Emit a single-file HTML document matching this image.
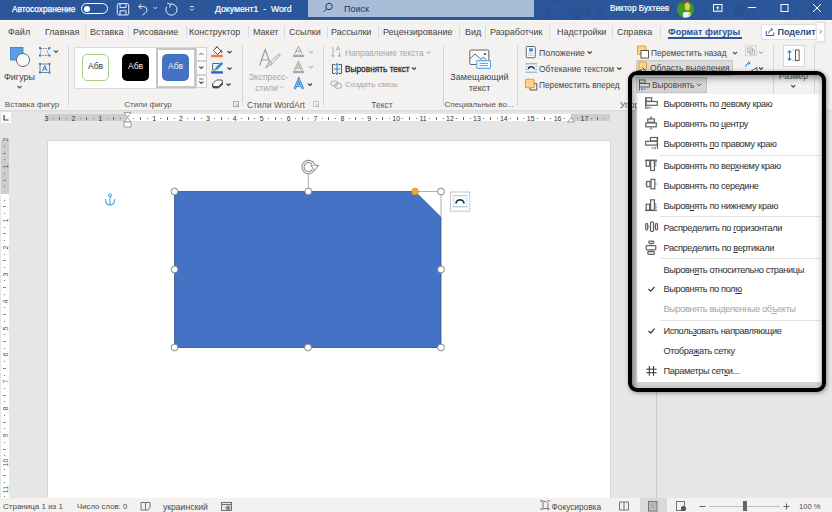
<!DOCTYPE html>
<html><head><meta charset="utf-8">
<style>
*{margin:0;padding:0;box-sizing:border-box}
html,body{width:832px;height:512px;overflow:hidden;background:#f3f2f1;font-family:"Liberation Sans",sans-serif;position:relative}
.a{position:absolute;white-space:nowrap;line-height:10px}
svg{position:absolute;overflow:visible}
u{text-underline-offset:1px;text-decoration-thickness:0.8px}
.m{-webkit-text-stroke:0.05px currentColor}
</style></head><body>
<div class="a" style="left:0px;top:0px;width:832px;height:20px;background:#2b579a;"></div>
<div class="a" style="left:0px;top:20px;width:832px;height:1px;background:#fbfbf8;"></div>
<div class="a" style="left:12px;top:3.5px;font-size:8.3px;color:#fff;font-weight:normal;-webkit-text-stroke:0.25px #fff">Автосохранение</div>
<div class="a" style="left:81px;top:3px;width:27px;height:11px;border:1px solid #fff;border-radius:6px"></div>
<div class="a" style="left:84px;top:5.5px;width:6px;height:6px;background:#fff;border-radius:50%"></div>
<svg style="left:0;top:0" width="1" height="1" fill="none" stroke="#e8eef7" stroke-width="1">
<rect x="117.3" y="3.6" width="11.4" height="11.4" rx="1.5"/>
<path d="M120 3.6 V7.6 H126 V3.6"/>
<path d="M120 15 V10.8 H126 V15"/>
<path d="M138.8 6.6 L141.3 4.1 M138.8 6.6 L141.3 9.1 M138.8 6.6 H143.5 A3.4 3.4 0 0 1 145.2 13 L142.5 15.2" />
<path d="M153.6 7 L155.4 8.8 L157.2 7" stroke-width="0.9"/>
<path d="M170.3 4.1 A5.6 5.6 0 1 1 166.7 6.6" />
<path d="M167.2 3.3 L170.6 4.2 L169.6 7.6" />
<path d="M189.8 6.6 H194 M190 8.6 L191.9 10.5 L193.8 8.6" stroke-width="0.9"/>
</svg>
<div class="a" style="left:215px;top:3.5px;font-size:8.7px;color:#fff;font-weight:normal;-webkit-text-stroke:0.2px #fff">Документ1&nbsp; - &nbsp;Word</div>
<svg style="left:0;top:0" width="1" height="1"><g stroke="#24508f" stroke-width="1" fill="none" opacity="0.9">
<path d="M541 0 L555 20 M555 0 L541 20 M553 2 H564 L571 12 L564 20 M571 12 H590"/>
<circle cx="584" cy="10.5" r="5.5"/>
<path d="M593 0 L607 20 M607 0 L593 20"/>
<path d="M700 0 L712 20 M712 0 L700 20 M745 0 L759 20 M759 0 L745 20 M803 0 L817 20 M817 0 L803 20"/>
<circle cx="791" cy="11" r="6"/>
</g>
<path d="M544 20 L548.5 13 L553 20 Z M572 20 L577 13 L582 20 Z" fill="#24508f" opacity="0.8"/>
<circle cx="739" cy="10" r="6" fill="#26508c" opacity="0.8"/>
</svg>
<div class="a" style="left:308px;top:0px;width:226px;height:17px;background:#a9bcd7;"></div>
<svg style="left:0;top:0" width="1" height="1" fill="none" stroke="#1f3864" stroke-width="1">
<circle cx="329" cy="6.5" r="3.2"/><path d="M326.7 8.8 L323.5 12"/></svg>
<div class="a" style="left:344px;top:3.5px;font-size:9px;color:#1f3864;font-weight:normal;">Поиск</div>
<div class="a" style="left:610px;top:4.3px;font-size:8.2px;color:#fff;font-weight:normal;-webkit-text-stroke:0.2px #fff">Виктор Бухтеев</div>
<svg style="left:0;top:0" width="1" height="1"><defs><clipPath id="av"><circle cx="685.5" cy="9.2" r="8.5"/></clipPath></defs>
<g clip-path="url(#av)"><rect x="676" y="0" width="20" height="20" fill="#3f9a2c"/><rect x="676" y="0" width="20" height="4" fill="#7a5a2a"/>
<ellipse cx="687.3" cy="6.5" rx="2.6" ry="4" fill="#f0c93a"/><rect x="683" y="12" width="7.5" height="8" rx="1.5" fill="#f2f2f2"/><circle cx="689.5" cy="14.5" r="1.3" fill="#eec23a"/></g></svg>
<svg style="left:0;top:0" width="1" height="1" fill="none" stroke="#fff" stroke-width="1">
<rect x="713.5" y="4.5" width="8.5" height="6.8"/><path d="M717.75 10.5 V6.5 M716.2 8 L717.75 6.5 L719.3 8" stroke-width="0.9"/>
<path d="M748 7.5 H756"/>
<rect x="781" y="4.5" width="7" height="7"/>
<path d="M813 4 L821 12 M821 4 L813 12"/>
</svg>
<div class="a" style="left:8px;top:27px;font-size:9px;color:#444;font-weight:normal;">Файл</div>
<div class="a" style="left:45px;top:27px;font-size:9px;color:#444;font-weight:normal;">Главная</div>
<div class="a" style="left:90px;top:27px;font-size:9px;color:#444;font-weight:normal;">Вставка</div>
<div class="a" style="left:133px;top:27px;font-size:9px;color:#444;font-weight:normal;">Рисование</div>
<div class="a" style="left:189px;top:27px;font-size:9px;color:#444;font-weight:normal;">Конструктор</div>
<div class="a" style="left:253px;top:27px;font-size:9px;color:#444;font-weight:normal;">Макет</div>
<div class="a" style="left:289px;top:27px;font-size:9px;color:#444;font-weight:normal;">Ссылки</div>
<div class="a" style="left:331px;top:27px;font-size:9px;color:#444;font-weight:normal;">Рассылки</div>
<div class="a" style="left:383px;top:27px;font-size:9px;color:#444;font-weight:normal;">Рецензирование</div>
<div class="a" style="left:465px;top:27px;font-size:9px;color:#444;font-weight:normal;">Вид</div>
<div class="a" style="left:490px;top:27px;font-size:9px;color:#444;font-weight:normal;">Разработчик</div>
<div class="a" style="left:557px;top:27px;font-size:9px;color:#444;font-weight:normal;">Надстройки</div>
<div class="a" style="left:617px;top:27px;font-size:9px;color:#444;font-weight:normal;">Справка</div>
<div class="a" style="left:85px;top:26px;width:1px;height:12px;background:#dcdcdc;"></div>
<div class="a" style="left:128px;top:26px;width:1px;height:12px;background:#dcdcdc;"></div>
<div class="a" style="left:186px;top:26px;width:1px;height:12px;background:#dcdcdc;"></div>
<div class="a" style="left:248px;top:26px;width:1px;height:12px;background:#dcdcdc;"></div>
<div class="a" style="left:283.5px;top:26px;width:1px;height:12px;background:#dcdcdc;"></div>
<div class="a" style="left:327px;top:26px;width:1px;height:12px;background:#dcdcdc;"></div>
<div class="a" style="left:378px;top:26px;width:1px;height:12px;background:#dcdcdc;"></div>
<div class="a" style="left:459px;top:26px;width:1px;height:12px;background:#dcdcdc;"></div>
<div class="a" style="left:485px;top:26px;width:1px;height:12px;background:#dcdcdc;"></div>
<div class="a" style="left:549px;top:26px;width:1px;height:12px;background:#dcdcdc;"></div>
<div class="a" style="left:612px;top:26px;width:1px;height:12px;background:#dcdcdc;"></div>
<div class="a" style="left:660px;top:26px;width:1px;height:12px;background:#dcdcdc;"></div>
<div class="a" style="left:668px;top:27px;font-size:9px;color:#2b579a;font-weight:bold;">Формат фигуры</div>
<div class="a" style="left:668px;top:36.5px;width:74px;height:2px;background:#2b579a;"></div>
<div class="a" style="left:760.5px;top:23.5px;width:57px;height:16px;background:#fff;border:1px solid #dedede;border-radius:2px"></div>
<svg style="left:0;top:0" width="1" height="1" fill="none" stroke="#555" stroke-width="0.9">
<path d="M766.3 31 V35.5 H773.8 V32.5" stroke="#2f5a9e" stroke-width="1"/><path d="M768.5 33.5 Q768.8 29.8 772.3 29.5 M770.8 28 L772.6 29.5 L770.8 31" stroke="#2f5a9e" stroke-width="0.9"/></svg>
<div class="a" style="left:777.5px;top:27px;font-size:9px;color:#2b4a80;font-weight:bold;">Поделит</div>
<div class="a" style="left:816px;top:21.5px;width:9px;height:20px;background:#fff;border:1px solid #e2e2e2;box-shadow:0 0 2px rgba(0,0,0,.12)"></div>
<svg style="left:0;top:0" width="1" height="1"><path d="M819.8 29.8 L821.6 31.6 L819.8 33.4" fill="none" stroke="#666" stroke-width="0.9"/></svg>
<svg style="left:0;top:0" width="1" height="1"><rect x="10.5" y="47.5" width="12.5" height="12.5" fill="#5aa0e0" stroke="#2b7cd3" stroke-width="0.8"/>
<circle cx="23" cy="60" r="6.6" fill="#f7f7f7" stroke="#6e6e6e" stroke-width="1"/>
<path d="M17.5 86.0 L19.5 88.0 L21.5 86.0" fill="none" stroke="#555" stroke-width="1.1"/>
<path d="M40.5 48.5 H49 M40 55.5 H49.5 M41 48.5 L40 55.5 M49 48.5 L47 52 L49.5 55.5" fill="none" stroke="#666" stroke-width="0.8" stroke-dasharray="1.5 1"/>
<rect x="39" y="47" width="2" height="2" fill="#1e88e5"/><rect x="48.5" y="47" width="2" height="2" fill="#1e88e5"/>
<rect x="39" y="54.5" width="2" height="2" fill="#1e88e5"/><rect x="48.5" y="54.5" width="2" height="2" fill="#1e88e5"/>
<path d="M54.0 50.5 L56 52.5 L58.0 50.5" fill="none" stroke="#555" stroke-width="1.1"/>
<rect x="40" y="64" width="9.5" height="8.5" fill="none" stroke="#666" stroke-width="0.8"/>
<rect x="39" y="63" width="2" height="2" fill="#1e88e5"/><rect x="48.5" y="63" width="2" height="2" fill="#1e88e5"/>
<rect x="39" y="71.5" width="2" height="2" fill="#1e88e5"/><rect x="48.5" y="71.5" width="2" height="2" fill="#1e88e5"/>
<path d="M42.5 71 L44.8 65.5 L47 71 M43.4 69 H46.2" fill="none" stroke="#1e6fc8" stroke-width="0.9"/>
</svg>
<div class="a" style="left:4px;top:72px;font-size:9px;color:#444;font-weight:normal;">Фигуры</div>
<div class="a" style="left:-3.0px;top:100px;width:70px;text-align:center;font-size:8px;color:#555;font-weight:normal">Вставка фигур</div>
<div class="a" style="left:68px;top:45px;width:1px;height:61px;background:#d6d6d6;"></div>
<div class="a" style="left:74px;top:46.5px;width:122px;height:42px;background:#fff;border:1px solid #dcdcdc"></div>
<div class="a" style="left:82px;top:54px;width:27px;height:26.5px;background:#fff;border:1.5px solid #a3d088;border-radius:5px"></div>
<div class="a" style="left:82.0px;top:61.3px;width:27px;text-align:center;font-size:8.5px;color:#333;font-weight:normal">Абв</div>
<div class="a" style="left:122px;top:54px;width:27px;height:27px;background:#000;border-radius:5px"></div>
<div class="a" style="left:122.0px;top:61.3px;width:27px;text-align:center;font-size:8.5px;color:#f4f4f4;font-weight:normal">Абв</div>
<div class="a" style="left:156px;top:48px;width:39.5px;height:39.5px;background:#fff;border:2px solid #c6c6c6"></div>
<div class="a" style="left:162px;top:54px;width:27px;height:27px;background:#4472c4;border-radius:5px"></div>
<div class="a" style="left:162.0px;top:61.3px;width:27px;text-align:center;font-size:8.5px;color:#f4f4f4;font-weight:normal">Абв</div>
<div class="a" style="left:196px;top:47px;width:10.5px;height:13.5px;background:#fafafa;border:1px solid #d2d2d2"></div>
<div class="a" style="left:196px;top:61px;width:10.5px;height:13.5px;background:#fafafa;border:1px solid #d2d2d2"></div>
<div class="a" style="left:196px;top:75px;width:10.5px;height:13px;background:#fafafa;border:1px solid #d2d2d2"></div>
<svg style="left:0;top:0" width="1" height="1"><path d="M199.3 55 L201.3 53 L203.3 55" fill="none" stroke="#555" stroke-width="0.9"/><path d="M199.3 66.5 L201.3 68.5 L203.3 66.5" fill="none" stroke="#555" stroke-width="1.1"/><path d="M199.2 79 H203.4" stroke="#555" stroke-width="0.8"/><path d="M199.3 81.5 L201.3 83.5 L203.3 81.5" fill="none" stroke="#555" stroke-width="1.1"/></svg>
<svg style="left:0;top:0" width="1" height="1">
<path d="M213.5 50.5 L217 47 L221 51 L217.5 54.5 Z" fill="#fff" stroke="#444" stroke-width="0.9"/>
<path d="M215 48.7 L217.5 46" fill="none" stroke="#444" stroke-width="0.8"/>
<path d="M221.3 49.3 Q223 51.5 222.3 53 Q221 53.5 220.8 52 Z" fill="#2b7cd3"/>
<rect x="211.2" y="54.8" width="11.7" height="2.4" fill="#ed7d31"/>
<path d="M219.5 63.5 H212.6 V70 H215" fill="none" stroke="#555" stroke-width="0.9"/>
<path d="M215.2 70.2 L216 67.5 L221.3 62.3 L222.9 63.8 L217.6 69 Z" fill="#2b88d8" stroke="#2b88d8" stroke-width="0.6"/>
<rect x="211.2" y="71.2" width="11.7" height="2.4" fill="#2f5fc8"/>
<path d="M212.5 84 L216.5 80 H222 L222.5 82.5 L218.5 86.5 H213 Z" fill="#fff" stroke="#444" stroke-width="0.9"/>
<path d="M212.5 84 L213 88 H218.5 L222.5 84.5 V82.5 L218.5 86.5 H213" fill="#555" stroke="#444" stroke-width="0.7"/>
<path d="M227.5 51.0 L229.5 53.0 L231.5 51.0" fill="none" stroke="#444" stroke-width="1.1"/><path d="M227.5 67.5 L229.5 69.5 L231.5 67.5" fill="none" stroke="#444" stroke-width="1.1"/><path d="M226.5 83.5 L228.5 85.5 L230.5 83.5" fill="none" stroke="#444" stroke-width="1.1"/></svg>
<div class="a" style="left:108.0px;top:100px;width:80px;text-align:center;font-size:8px;color:#555;font-weight:normal">Стили фигур</div>
<svg style="left:0;top:0" width="1" height="1"><path d="M233.5 101.5 H238.5 V106.5 H233.5 Z M235.5 103.5 L238 106" fill="none" stroke="#888" stroke-width="0.7"/></svg>
<div class="a" style="left:242px;top:45px;width:1px;height:61px;background:#d6d6d6;"></div>
<svg style="left:0;top:0" width="1" height="1">
<path d="M259.5 65.5 L265.2 49.5 L271 65.5 M261.6 60 H268.8" fill="none" stroke="#9c9c9c" stroke-width="1.2"/>
<path d="M270.5 61.5 L279 54.2 Q280.5 53.6 280.2 55 L272.5 63.5" fill="#f3f3f3" stroke="#9c9c9c" stroke-width="0.9"/>
<path d="M265.5 67.8 Q268 67 270.2 64.6 L272.2 63.5 L270.5 61.5 Q268 62 267.3 64.5 Q266.8 66.5 265.5 67.8 Z" fill="#d8d8d8" stroke="#9c9c9c" stroke-width="0.8"/>
<path d="M294.8 53.5 L298.5 46.4 L302.2 53.5 M296 51.2 H301" fill="none" stroke="#a0a0a0" stroke-width="1"/>
<rect x="293" y="54.7" width="11.2" height="2.4" fill="#a8a8a8"/>
<path d="M294.8 70 L298.5 62.5 L302.2 70 M296 67.7 H301" fill="none" stroke="#a0a0a0" stroke-width="1.9"/>
<path d="M294.8 70 L298.5 62.5 L302.2 70 M296 67.7 H301" fill="none" stroke="#f3f2f1" stroke-width="0.6"/>
<rect x="293" y="70.8" width="11.2" height="2.4" fill="#a8a8a8"/>
<path d="M294.6 89 L298.8 79.2 L303 89 M296.3 85.5 H301.3" fill="none" stroke="#1f78d1" stroke-width="2.4"/>
<path d="M294.6 89 L298.8 79.2 L303 89 M296.3 85.5 H301.3" fill="none" stroke="#cfe6fb" stroke-width="0.7"/>
<path d="M309.0 51.0 L311 53.0 L313.0 51.0" fill="none" stroke="#bbb" stroke-width="1.1"/><path d="M309.0 66.0 L311 68.0 L313.0 66.0" fill="none" stroke="#bbb" stroke-width="1.1"/><path d="M308.0 83.5 L310 85.5 L312.0 83.5" fill="none" stroke="#444" stroke-width="1.1"/></svg>
<div class="a" style="left:238.5px;top:72px;width:60px;text-align:center;font-size:8.5px;color:#a6a6a6;font-weight:normal">Экспресс-</div>
<div class="a" style="left:236.5px;top:82.5px;width:60px;text-align:center;font-size:8.5px;color:#a6a6a6;font-weight:normal">стили</div>
<svg style="left:0;top:0" width="1" height="1"><path d="M279.7 86.39999999999999 L281.5 88.2 L283.3 86.39999999999999" fill="none" stroke="#b0b0b0" stroke-width="0.9"/></svg>
<div class="a" style="left:236.0px;top:100px;width:80px;text-align:center;font-size:8.5px;color:#555;font-weight:normal">Стили WordArt</div>
<svg style="left:0;top:0" width="1" height="1"><path d="M313.5 101.5 H318.5 V106.5 H313.5 Z M315.5 103.5 L318 106" fill="none" stroke="#aaa" stroke-width="0.7"/></svg>
<div class="a" style="left:323px;top:45px;width:1px;height:61px;background:#d6d6d6;"></div>
<svg style="left:0;top:0" width="1" height="1">
<path d="M333 47 V56.5 M331.6 55 L333 56.7 L334.4 55 M339.5 52 V56.8 M338.1 55.2 L339.5 56.9 L340.9 55.2" fill="none" stroke="#a8a8a8" stroke-width="0.9"/>
<path d="M336 51 L338 46 L340 51 M336.7 49.3 H339.3" fill="none" stroke="#a8a8a8" stroke-width="0.7"/>
<path d="M335 64.5 H332.5 V73.5 H335 M339 64.5 H341.5 V73.5 H339" fill="none" stroke="#444" stroke-width="0.9"/>
<path d="M337 63.5 V74.5 M335.5 65.5 L337 63.5 L338.5 65.5 M335.5 72.5 L337 74.5 L338.5 72.5 M334 69 H340" fill="none" stroke="#1e6fc8" stroke-width="0.9"/>
<rect x="331" y="81" width="6.8" height="5" rx="2.5" fill="none" stroke="#a8a8a8" stroke-width="1"/>
<rect x="334.6" y="83.3" width="7" height="5" rx="2.5" fill="none" stroke="#a8a8a8" stroke-width="1"/>
<path d="M426.5 51.5 L428.5 53.5 L430.5 51.5" fill="none" stroke="#bbb" stroke-width="1.1"/><path d="M412.0 67.5 L414 69.5 L416.0 67.5" fill="none" stroke="#444" stroke-width="1.1"/></svg>
<div class="a" style="left:345px;top:47.5px;font-size:8.3px;color:#a6a6a6;font-weight:normal;">Направление текста</div>
<div class="a" style="left:345px;top:63.5px;font-size:8.3px;color:#2e2e2e;font-weight:normal;-webkit-text-stroke:0.3px #2e2e2e">Выровнять текст</div>
<div class="a" style="left:345px;top:79.5px;font-size:8px;color:#a6a6a6;font-weight:normal;">Создать связь</div>
<div class="a" style="left:352.0px;top:100px;width:60px;text-align:center;font-size:8.5px;color:#555;font-weight:normal">Текст</div>
<div class="a" style="left:442.5px;top:45px;width:1px;height:61px;background:#d6d6d6;"></div>
<svg style="left:0;top:0" width="1" height="1">
<rect x="469.8" y="50" width="19" height="14.5" rx="0.8" fill="#fafafa" stroke="#666" stroke-width="1"/>
<path d="M470.3 58.5 L475 54 L481 59.2 L483.5 57.3 L486 59.5" fill="none" stroke="#555" stroke-width="0.9"/>
<circle cx="485" cy="54" r="1.1" fill="#444"/>
<rect x="476.8" y="60.6" width="13.6" height="7.8" rx="0.8" fill="#fff" stroke="#5aaae6" stroke-width="1.1"/>
<path d="M479.5 63.4 H488 M479.5 65.6 H488" stroke="#777" stroke-width="0.8"/>
</svg>
<div class="a" style="left:444.5px;top:72px;width:70px;text-align:center;font-size:9px;color:#444;font-weight:normal">Замещающий</div>
<div class="a" style="left:444.5px;top:83px;width:70px;text-align:center;font-size:9px;color:#444;font-weight:normal">текст</div>
<div class="a" style="left:439.0px;top:100px;width:80px;text-align:center;font-size:8px;color:#555;font-weight:normal">Специальные во...</div>
<div class="a" style="left:517px;top:45px;width:1px;height:61px;background:#d6d6d6;"></div>
<svg style="left:0;top:0" width="1" height="1">
<rect x="526.3" y="46.5" width="9" height="11.2" rx="0.8" fill="#fff" stroke="#555" stroke-width="0.9"/>
<rect x="529" y="48.3" width="4" height="3.2" fill="#3b8ede"/>
<path d="M528 53.3 H533.5 M528 55.3 H533.5" stroke="#999" stroke-width="0.6"/>
<path d="M525.5 63.8 H537 M525.5 72.2 H537 M525.5 66.3 H527 M535.5 66.3 H537 M525.5 69.6 H527 M535.5 69.6 H537" stroke="#4da3e0" stroke-width="0.9"/>
<path d="M528.3 69.3 A3 2.6 0 0 1 534.3 69.3" fill="none" stroke="#333" stroke-width="1.5"/>
<path d="M531 83.5 H536.8 V90 H530 V87" fill="none" stroke="#444" stroke-width="0.9"/>
<rect x="525.5" y="79.2" width="8.6" height="8.6" rx="1" fill="#fbd58c" stroke="#ec9a2c" stroke-width="1.1"/>
<path d="M587.7 51.5 L589.7 53.5 L591.7 51.5" fill="none" stroke="#444" stroke-width="1.1"/><path d="M617.3 67.5 L619.3 69.5 L621.3 67.5" fill="none" stroke="#444" stroke-width="1.1"/></svg>
<div class="a" style="left:539px;top:47.5px;font-size:8.7px;color:#444;font-weight:normal;">Положение</div>
<div class="a" style="left:539px;top:63.5px;font-size:8.4px;color:#444;font-weight:normal;">Обтекание текстом</div>
<div class="a" style="left:539px;top:80px;font-size:8.3px;color:#444;font-weight:normal;">Переместить вперед</div>
<div class="a" style="left:620px;top:99.6px;font-size:8.6px;color:#555;font-weight:normal;">Упорядочение</div>
<svg style="left:0;top:0" width="1" height="1">
<rect x="637.5" y="46" width="8.5" height="8.5" rx="1" fill="#fbd58c" stroke="#ec9a2c" stroke-width="1"/>
<rect x="641" y="50.5" width="7.5" height="7.5" fill="#fff" stroke="#444" stroke-width="0.9"/>
<path d="M733.0 52.0 L735 54.0 L737.0 52.0" fill="none" stroke="#555" stroke-width="1.1"/></svg>
<div class="a" style="left:651px;top:47.5px;font-size:8.3px;color:#444;font-weight:normal;">Переместить назад</div>
<div class="a" style="left:636px;top:60px;width:97px;height:15.5px;background:#dadada;border:1px solid #c8c8c8"></div>
<svg style="left:0;top:0" width="1" height="1">
<rect x="639" y="62" width="7.5" height="7.5" rx="1" fill="#fbd58c" stroke="#ec9a2c" stroke-width="1"/>
<path d="M637.5 70.5 H642 M642.5 67.5 L645.5 70.5 L642.5 73.5" fill="none" stroke="#444" stroke-width="0.9"/>
</svg>
<div class="a" style="left:650px;top:62.5px;font-size:8.5px;color:#444;font-weight:normal;">Область выделения</div>
<svg style="left:0;top:0" width="1" height="1">
<rect x="745.5" y="45.8" width="11" height="10" fill="none" stroke="#b0b0b0" stroke-width="0.8" stroke-dasharray="1.3 1"/>
<rect x="747.8" y="48" width="4.8" height="4.2" fill="none" stroke="#a8a8a8" stroke-width="0.8"/>
<rect x="749.8" y="50" width="4.8" height="4.2" fill="none" stroke="#a8a8a8" stroke-width="0.8"/>
<path d="M759.0 51.5 L761 53.5 L763.0 51.5" fill="none" stroke="#b8b8b8" stroke-width="1.1"/>
<path d="M746.5 74 L757 67.5 V74 Z" fill="none" stroke="#444" stroke-width="0.9"/>
<path d="M745.8 67 Q746.2 62.8 750 63 M748.3 61.5 L750.2 63 L748.3 64.6" fill="none" stroke="#1e88e5" stroke-width="1"/>
<path d="M759.0 67.5 L761 69.5 L763.0 67.5" fill="none" stroke="#444" stroke-width="1.1"/></svg>
<div class="a" style="left:773px;top:45px;width:1px;height:61px;background:#d6d6d6;"></div>
<div class="a" style="left:782.5px;top:45px;width:22px;height:21.5px;background:#fff;border:1px solid #d4d4d4"></div>
<svg style="left:0;top:0" width="1" height="1">
<path d="M789.5 51 V60" fill="none" stroke="#2b88d8" stroke-width="1"/>
<path d="M787.8 52.2 L789.5 50.2 L791.2 52.2 Z M787.8 58.8 L789.5 60.8 L791.2 58.8 Z" fill="#2b88d8" stroke="#2b88d8" stroke-width="0.8"/>
<rect x="795.5" y="50" width="3.6" height="10.6" fill="none" stroke="#444" stroke-width="0.9"/>
<path d="M792.5 50 H793.5 M792.5 60.6 H793.5" stroke="#777" stroke-width="0.8"/>
<path d="M791.3 85.2 L793.3 87.2 L795.3 85.2" fill="none" stroke="#444" stroke-width="1.1"/></svg>
<div class="a" style="left:773.4px;top:71px;width:40px;text-align:center;font-size:8.5px;color:#555;font-weight:normal">Размер</div>
<div class="a" style="left:813.5px;top:44px;width:1px;height:62px;background:#d6d6d6;"></div>
<div class="a" style="left:0px;top:110px;width:832px;height:388px;background:#e6e6e6;"></div>
<div class="a" style="left:47px;top:140px;width:564px;height:358px;background:#fff;border:1px solid #d6d6d6;border-bottom:none"></div>
<div class="a" style="left:0px;top:111px;width:12px;height:13px;background:#fafafa;border:1px solid #e6e6e6"></div>
<svg style="left:0;top:0" width="1" height="1"><path d="M4 115 V120 H8.5" fill="none" stroke="#444" stroke-width="1.2"/></svg>
<div class="a" style="left:0px;top:110px;width:832px;height:2px;background:linear-gradient(#d8d8d8,#e6e6e6);"></div>
<div class="a" style="left:45px;top:114px;width:82px;height:7px;background:#cdcdcd;"></div>
<div class="a" style="left:127px;top:114px;width:444px;height:7px;background:#ffffff;"></div>
<div class="a" style="left:571px;top:114px;width:39px;height:7px;background:#cdcdcd;"></div>
<div class="a" style="left:40.5px;top:113.5px;width:12px;text-align:center;font-size:7px;color:#333;line-height:9px">3</div>
<div class="a" style="left:67.4px;top:113.5px;width:12px;text-align:center;font-size:7px;color:#333;line-height:9px">2</div>
<div class="a" style="left:94.3px;top:113.5px;width:12px;text-align:center;font-size:7px;color:#333;line-height:9px">1</div>
<div class="a" style="left:148.1px;top:113.5px;width:12px;text-align:center;font-size:7px;color:#333;line-height:9px">1</div>
<div class="a" style="left:175.0px;top:113.5px;width:12px;text-align:center;font-size:7px;color:#333;line-height:9px">2</div>
<div class="a" style="left:201.9px;top:113.5px;width:12px;text-align:center;font-size:7px;color:#333;line-height:9px">3</div>
<div class="a" style="left:228.8px;top:113.5px;width:12px;text-align:center;font-size:7px;color:#333;line-height:9px">4</div>
<div class="a" style="left:255.7px;top:113.5px;width:12px;text-align:center;font-size:7px;color:#333;line-height:9px">5</div>
<div class="a" style="left:282.6px;top:113.5px;width:12px;text-align:center;font-size:7px;color:#333;line-height:9px">6</div>
<div class="a" style="left:309.5px;top:113.5px;width:12px;text-align:center;font-size:7px;color:#333;line-height:9px">7</div>
<div class="a" style="left:336.4px;top:113.5px;width:12px;text-align:center;font-size:7px;color:#333;line-height:9px">8</div>
<div class="a" style="left:363.3px;top:113.5px;width:12px;text-align:center;font-size:7px;color:#333;line-height:9px">9</div>
<div class="a" style="left:390.2px;top:113.5px;width:12px;text-align:center;font-size:7px;color:#333;line-height:9px">10</div>
<div class="a" style="left:417.1px;top:113.5px;width:12px;text-align:center;font-size:7px;color:#333;line-height:9px">11</div>
<div class="a" style="left:444.0px;top:113.5px;width:12px;text-align:center;font-size:7px;color:#333;line-height:9px">12</div>
<div class="a" style="left:470.9px;top:113.5px;width:12px;text-align:center;font-size:7px;color:#333;line-height:9px">13</div>
<div class="a" style="left:497.8px;top:113.5px;width:12px;text-align:center;font-size:7px;color:#333;line-height:9px">14</div>
<div class="a" style="left:524.7px;top:113.5px;width:12px;text-align:center;font-size:7px;color:#333;line-height:9px">15</div>
<div class="a" style="left:551.6px;top:113.5px;width:12px;text-align:center;font-size:7px;color:#333;line-height:9px">16</div>
<div class="a" style="left:578.5px;top:113.5px;width:12px;text-align:center;font-size:7px;color:#333;line-height:9px">17</div>
<svg style="left:0;top:0" width="1" height="1"><rect x="53" y="118" width="1" height="1" fill="#777"/><rect x="59" y="117" width="1" height="3" fill="#666"/><rect x="66" y="118" width="1" height="1" fill="#777"/><rect x="80" y="118" width="1" height="1" fill="#777"/><rect x="86" y="117" width="1" height="3" fill="#666"/><rect x="93" y="118" width="1" height="1" fill="#777"/><rect x="107" y="118" width="1" height="1" fill="#777"/><rect x="113" y="117" width="1" height="3" fill="#666"/><rect x="120" y="118" width="1" height="1" fill="#777"/><rect x="133" y="118" width="1" height="1" fill="#777"/><rect x="140" y="117" width="1" height="3" fill="#666"/><rect x="147" y="118" width="1" height="1" fill="#777"/><rect x="160" y="118" width="1" height="1" fill="#777"/><rect x="167" y="117" width="1" height="3" fill="#666"/><rect x="174" y="118" width="1" height="1" fill="#777"/><rect x="187" y="118" width="1" height="1" fill="#777"/><rect x="194" y="117" width="1" height="3" fill="#666"/><rect x="201" y="118" width="1" height="1" fill="#777"/><rect x="214" y="118" width="1" height="1" fill="#777"/><rect x="221" y="117" width="1" height="3" fill="#666"/><rect x="228" y="118" width="1" height="1" fill="#777"/><rect x="241" y="118" width="1" height="1" fill="#777"/><rect x="248" y="117" width="1" height="3" fill="#666"/><rect x="254" y="118" width="1" height="1" fill="#777"/><rect x="268" y="118" width="1" height="1" fill="#777"/><rect x="275" y="117" width="1" height="3" fill="#666"/><rect x="281" y="118" width="1" height="1" fill="#777"/><rect x="295" y="118" width="1" height="1" fill="#777"/><rect x="302" y="117" width="1" height="3" fill="#666"/><rect x="308" y="118" width="1" height="1" fill="#777"/><rect x="322" y="118" width="1" height="1" fill="#777"/><rect x="328" y="117" width="1" height="3" fill="#666"/><rect x="335" y="118" width="1" height="1" fill="#777"/><rect x="349" y="118" width="1" height="1" fill="#777"/><rect x="355" y="117" width="1" height="3" fill="#666"/><rect x="362" y="118" width="1" height="1" fill="#777"/><rect x="376" y="118" width="1" height="1" fill="#777"/><rect x="382" y="117" width="1" height="3" fill="#666"/><rect x="389" y="118" width="1" height="1" fill="#777"/><rect x="402" y="118" width="1" height="1" fill="#777"/><rect x="409" y="117" width="1" height="3" fill="#666"/><rect x="416" y="118" width="1" height="1" fill="#777"/><rect x="429" y="118" width="1" height="1" fill="#777"/><rect x="436" y="117" width="1" height="3" fill="#666"/><rect x="443" y="118" width="1" height="1" fill="#777"/><rect x="456" y="118" width="1" height="1" fill="#777"/><rect x="463" y="117" width="1" height="3" fill="#666"/><rect x="470" y="118" width="1" height="1" fill="#777"/><rect x="483" y="118" width="1" height="1" fill="#777"/><rect x="490" y="117" width="1" height="3" fill="#666"/><rect x="497" y="118" width="1" height="1" fill="#777"/><rect x="510" y="118" width="1" height="1" fill="#777"/><rect x="517" y="117" width="1" height="3" fill="#666"/><rect x="523" y="118" width="1" height="1" fill="#777"/><rect x="537" y="118" width="1" height="1" fill="#777"/><rect x="544" y="117" width="1" height="3" fill="#666"/><rect x="550" y="118" width="1" height="1" fill="#777"/><rect x="564" y="118" width="1" height="1" fill="#777"/><rect x="577" y="118" width="1" height="1" fill="#777"/><rect x="591" y="118" width="1" height="1" fill="#777"/><rect x="597" y="117" width="1" height="3" fill="#666"/><rect x="604" y="118" width="1" height="1" fill="#777"/></svg>
<svg style="left:0;top:0" width="1" height="1" fill="#fff" stroke="#8a8a8a" stroke-width="0.8">
<path d="M124 112.5 H131 L127.5 117.5 Z"/><path d="M127.5 117.5 L131 122 H124 Z"/><rect x="124" y="122" width="7" height="5"/>
<path d="M571 117.5 L574.5 122 H567.5 Z"/>
</svg>
<div class="a" style="left:1px;top:140px;width:8px;height:53.5px;background:#cdcdcd;"></div>
<div class="a" style="left:1px;top:193.5px;width:8px;height:304.5px;background:#ffffff;"></div>
<div class="a" style="left:-1px;top:135.2px;width:12px;height:9px;text-align:center;font-size:7px;color:#555;line-height:9px;transform:rotate(-90deg)">2</div>
<div class="a" style="left:-1px;top:162.1px;width:12px;height:9px;text-align:center;font-size:7px;color:#555;line-height:9px;transform:rotate(-90deg)">1</div>
<div class="a" style="left:-1px;top:215.9px;width:12px;height:9px;text-align:center;font-size:7px;color:#555;line-height:9px;transform:rotate(-90deg)">1</div>
<div class="a" style="left:-1px;top:242.8px;width:12px;height:9px;text-align:center;font-size:7px;color:#555;line-height:9px;transform:rotate(-90deg)">2</div>
<div class="a" style="left:-1px;top:269.7px;width:12px;height:9px;text-align:center;font-size:7px;color:#555;line-height:9px;transform:rotate(-90deg)">3</div>
<div class="a" style="left:-1px;top:296.6px;width:12px;height:9px;text-align:center;font-size:7px;color:#555;line-height:9px;transform:rotate(-90deg)">4</div>
<div class="a" style="left:-1px;top:323.5px;width:12px;height:9px;text-align:center;font-size:7px;color:#555;line-height:9px;transform:rotate(-90deg)">5</div>
<div class="a" style="left:-1px;top:350.4px;width:12px;height:9px;text-align:center;font-size:7px;color:#555;line-height:9px;transform:rotate(-90deg)">6</div>
<div class="a" style="left:-1px;top:377.3px;width:12px;height:9px;text-align:center;font-size:7px;color:#555;line-height:9px;transform:rotate(-90deg)">7</div>
<div class="a" style="left:-1px;top:404.2px;width:12px;height:9px;text-align:center;font-size:7px;color:#555;line-height:9px;transform:rotate(-90deg)">8</div>
<div class="a" style="left:-1px;top:431.1px;width:12px;height:9px;text-align:center;font-size:7px;color:#555;line-height:9px;transform:rotate(-90deg)">9</div>
<div class="a" style="left:-1px;top:458.0px;width:12px;height:9px;text-align:center;font-size:7px;color:#555;line-height:9px;transform:rotate(-90deg)">10</div>
<div class="a" style="left:-1px;top:484.9px;width:12px;height:9px;text-align:center;font-size:7px;color:#555;line-height:9px;transform:rotate(-90deg)">11</div>
<svg style="left:0;top:0" width="1" height="1"><rect x="4" y="146" width="1" height="1" fill="#777"/><rect x="3" y="153" width="3" height="1" fill="#888"/><rect x="4" y="159" width="1" height="1" fill="#777"/><rect x="4" y="173" width="1" height="1" fill="#777"/><rect x="3" y="180" width="3" height="1" fill="#888"/><rect x="4" y="186" width="1" height="1" fill="#777"/><rect x="4" y="200" width="1" height="1" fill="#777"/><rect x="3" y="206" width="3" height="1" fill="#888"/><rect x="4" y="213" width="1" height="1" fill="#777"/><rect x="4" y="227" width="1" height="1" fill="#777"/><rect x="3" y="233" width="3" height="1" fill="#888"/><rect x="4" y="240" width="1" height="1" fill="#777"/><rect x="4" y="254" width="1" height="1" fill="#777"/><rect x="3" y="260" width="3" height="1" fill="#888"/><rect x="4" y="267" width="1" height="1" fill="#777"/><rect x="4" y="280" width="1" height="1" fill="#777"/><rect x="3" y="287" width="3" height="1" fill="#888"/><rect x="4" y="294" width="1" height="1" fill="#777"/><rect x="4" y="307" width="1" height="1" fill="#777"/><rect x="3" y="314" width="3" height="1" fill="#888"/><rect x="4" y="321" width="1" height="1" fill="#777"/><rect x="4" y="334" width="1" height="1" fill="#777"/><rect x="3" y="341" width="3" height="1" fill="#888"/><rect x="4" y="348" width="1" height="1" fill="#777"/><rect x="4" y="361" width="1" height="1" fill="#777"/><rect x="3" y="368" width="3" height="1" fill="#888"/><rect x="4" y="375" width="1" height="1" fill="#777"/><rect x="4" y="388" width="1" height="1" fill="#777"/><rect x="3" y="395" width="3" height="1" fill="#888"/><rect x="4" y="401" width="1" height="1" fill="#777"/><rect x="4" y="415" width="1" height="1" fill="#777"/><rect x="3" y="422" width="3" height="1" fill="#888"/><rect x="4" y="428" width="1" height="1" fill="#777"/><rect x="4" y="442" width="1" height="1" fill="#777"/><rect x="3" y="449" width="3" height="1" fill="#888"/><rect x="4" y="455" width="1" height="1" fill="#777"/><rect x="4" y="469" width="1" height="1" fill="#777"/><rect x="3" y="475" width="3" height="1" fill="#888"/><rect x="4" y="482" width="1" height="1" fill="#777"/><rect x="4" y="496" width="1" height="1" fill="#777"/></svg>
<div class="a" style="left:655.5px;top:386px;width:1px;height:112px;background:#c8c8c8;"></div>
<svg style="left:0;top:0" width="1" height="1">
<polygon points="174.5,191.5 415,191.5 441,217.3 441,347.5 174.5,347.5" fill="#4472c4" stroke="#2f528f" stroke-width="0.8"/>
<path d="M415 191.5 H441 V217.3" fill="none" stroke="#9a9a9a" stroke-width="0.8"/>
<path d="M308.3 191.5 V174" fill="none" stroke="#9a9a9a" stroke-width="0.8"/>
<path d="M313.2 170.2 A5.6 5.6 0 1 1 313.6 164.6" fill="none" stroke="#8c8c8c" stroke-width="3.2"/>
<path d="M313.2 170.2 A5.6 5.6 0 1 1 313.6 164.6" fill="none" stroke="#fff" stroke-width="1.1"/>
<path d="M310.8 165.2 L318.5 165.2 L314.6 170.6 Z" fill="#fff" stroke="#8c8c8c" stroke-width="1"/>
<path d="M312.2 164.6 L313.8 164.6" stroke="#fff" stroke-width="1.5"/>
<circle cx="174.5" cy="191.5" r="3.4" fill="#fff" stroke="#858585" stroke-width="1"/><circle cx="308.3" cy="191.5" r="3.4" fill="#fff" stroke="#858585" stroke-width="1"/><circle cx="441" cy="191.5" r="3.4" fill="#fff" stroke="#858585" stroke-width="1"/><circle cx="174.5" cy="269.5" r="3.4" fill="#fff" stroke="#858585" stroke-width="1"/><circle cx="441" cy="269.5" r="3.4" fill="#fff" stroke="#858585" stroke-width="1"/><circle cx="174.5" cy="347.5" r="3.4" fill="#fff" stroke="#858585" stroke-width="1"/><circle cx="308" cy="347.5" r="3.4" fill="#fff" stroke="#858585" stroke-width="1"/><circle cx="441" cy="347.5" r="3.4" fill="#fff" stroke="#858585" stroke-width="1"/>
<circle cx="415" cy="191.5" r="3.4" fill="#f4a52e" stroke="#c98a2a" stroke-width="0.6"/>
<rect x="450.5" y="192" width="19.2" height="19.2" fill="#fff" stroke="#c8c8c8" stroke-width="1"/>
<path d="M452.8 195.8 H467.5 M452.8 206.8 H467.5 M452.8 198.7 H454.3 M452.8 201.3 H454.3 M452.8 204 H454.3 M465.9 198.7 H467.5 M465.9 201.3 H467.5 M465.9 204 H467.5" stroke="#7ab8e6" stroke-width="0.9"/>
<path d="M456 203.6 A4 3.8 0 0 1 464 203.6" fill="none" stroke="#333" stroke-width="1.7"/>
<g stroke="#4ea6de" stroke-width="1.1" fill="none"><circle cx="110" cy="195.3" r="1.5"/><path d="M110 196.8 V205 M105.3 199 Q105.3 205 110 205 Q114.7 205 114.7 199"/></g>
</svg>
<div class="a" style="left:0px;top:498px;width:832px;height:14px;background:#f3f2f1;"></div>
<div class="a" style="left:3px;top:502.2px;font-size:8px;color:#4a4a4a;font-weight:normal;">Страница 1 из 1</div>
<div class="a" style="left:77px;top:502.2px;font-size:7.8px;color:#4a4a4a;font-weight:normal;">Число слов: 0</div>
<div class="a" style="left:163px;top:502.2px;font-size:8.6px;color:#4a4a4a;font-weight:normal;">украинский</div>
<div class="a" style="left:551.5px;top:502.2px;font-size:8.3px;color:#4a4a4a;font-weight:normal;">Фокусировка</div>
<div class="a" style="left:639.5px;top:498px;width:27px;height:14px;background:#d9d9d9;"></div>
<div class="a" style="left:799px;top:502.2px;font-size:7.6px;color:#4a4a4a;font-weight:normal;">100 %</div>
<svg style="left:0;top:0" width="1" height="1" fill="none" stroke="#666" stroke-width="0.9">
<path d="M141 502.5 H145.5 V510 H141 Z M145.5 502.5 H150 V507.5 L148 510 H145.5"/>
<rect x="221.5" y="502.5" width="10" height="8" fill="#e6e6e6"/><path d="M221.5 504.5 H231.5"/><circle cx="228" cy="508" r="2" fill="#fff"/><circle cx="228" cy="508" r="0.8" fill="#555"/>
<path d="M541 502 V500.5 H542.5 M549 502 V500.5 H547.5 M541 508 V509.5 H542.5 M549 508 V509.5 H547.5"/>
<path d="M543 501.5 H546 L548 503.5 V508.5 H543 Z"/>
<path d="M619.5 502 H624 V510 H619.5 Z M624 502 H628.5 V510 H624"/>
<rect x="648.5" y="501.5" width="8.5" height="9.5" fill="#c4c4c4"/>
<path d="M650 504 H655.5 M650 506 H655.5 M650 508 H655.5" stroke="#888" stroke-width="0.6"/>
<rect x="676.5" y="501.5" width="8" height="9"/>
<circle cx="683.5" cy="508.5" r="2.6" fill="#555" stroke="none"/>
<path d="M699.5 506.5 H705.5 M783.5 506.5 H789.5 M786.5 503.5 V509.5" stroke="#555"/>
<path d="M709 506.5 H780" stroke="#b5b5b5" stroke-width="0.8"/>
</svg>
<div class="a" style="left:743px;top:501px;width:3.5px;height:9.5px;background:#666;"></div>
<div class="a" style="left:636px;top:77px;width:71px;height:15.5px;background:#d4d4d4;border:1px solid #c4c4c4"></div>
<svg style="left:0;top:0" width="1" height="1"><g fill="none" stroke="#555" stroke-width="0.9">
<path d="M639.5 79.5 V90.5"/><rect x="639.5" y="80" width="5.5" height="3"/><rect x="639.5" y="83.5" width="10" height="3.5"/></g>
<path d="M641 89 H646 M641 89 L642.5 87.8 M641 89 L642.5 90.2" fill="none" stroke="#1e88e5" stroke-width="0.8"/>
<path d="M697 83.8 L699 85.8 L701 83.8" fill="none" stroke="#444" stroke-width="1"/></svg>
<div class="a" style="left:652px;top:80px;font-size:8.3px;color:#444">Выровнять</div>
<div class="a" style="left:632px;top:110px;width:5.5px;height:278px;background:linear-gradient(90deg,#b8b8b8,#d6d6d6);"></div>
<div class="a" style="left:637px;top:93.5px;width:184px;height:288px;background:#ffffff;"></div>
<div class="a" style="left:637px;top:381.5px;width:184px;height:6.5px;background:#d4d4d4;"></div>
<div class="a m" style="left:663.5px;top:99.1px;font-size:9.2px;letter-spacing:-0.35px;color:#363636">Выровнять по <u>л</u>евому краю</div>
<div class="a m" style="left:663.5px;top:119.1px;font-size:9.2px;letter-spacing:-0.35px;color:#363636">Выровнять по <u>ц</u>ентру</div>
<div class="a m" style="left:663.5px;top:138.9px;font-size:9.2px;letter-spacing:-0.35px;color:#363636">Выровнять <u>п</u>о правому краю</div>
<div class="a m" style="left:663.5px;top:160.7px;font-size:9.2px;letter-spacing:-0.35px;color:#363636">Выровнять по вер<u>х</u>нему краю</div>
<div class="a m" style="left:663.5px;top:180.7px;font-size:9.2px;letter-spacing:-0.35px;color:#363636">Выровнять по сере<u>д</u>ине</div>
<div class="a m" style="left:663.5px;top:200.6px;font-size:9.2px;letter-spacing:-0.35px;color:#363636">Выров<u>н</u>ять по нижнему краю</div>
<div class="a m" style="left:663.5px;top:222.5px;font-size:9.2px;letter-spacing:-0.35px;color:#363636">Распределить по <u>г</u>оризонтали</div>
<div class="a m" style="left:663.5px;top:242.7px;font-size:9.2px;letter-spacing:-0.35px;color:#363636">Распределить по <u>в</u>ертикали</div>
<div class="a m" style="left:663.5px;top:264.8px;font-size:9.2px;letter-spacing:-0.35px;color:#363636">Выровн<u>я</u>ть относительно страницы</div>
<div class="a m" style="left:663.5px;top:284.4px;font-size:9.2px;letter-spacing:-0.35px;color:#363636">Выровнять по пол<u>ю</u></div>
<div class="a m" style="left:663.5px;top:304.3px;font-size:9.2px;letter-spacing:-0.35px;color:#a8a8a8">Выровнять выделенные об<u>ъ</u>екты</div>
<div class="a m" style="left:663.5px;top:326.3px;font-size:9.2px;letter-spacing:-0.35px;color:#363636">Исполь<u>з</u>овать направляющие</div>
<div class="a m" style="left:663.5px;top:346.2px;font-size:9.2px;letter-spacing:-0.35px;color:#363636">Отобра<u>ж</u>ать сетку</div>
<div class="a m" style="left:663.5px;top:365.9px;font-size:9.2px;letter-spacing:-0.35px;color:#363636">Параметры сет<u>к</u>и...</div>
<div class="a" style="left:659.5px;top:154.6px;width:161px;height:1px;background:#e1e1e1;"></div>
<div class="a" style="left:659.5px;top:215.9px;width:161px;height:1px;background:#e1e1e1;"></div>
<div class="a" style="left:659.5px;top:258.3px;width:161px;height:1px;background:#e1e1e1;"></div>
<div class="a" style="left:659.5px;top:319.8px;width:161px;height:1px;background:#e1e1e1;"></div>
<svg style="left:0;top:0" width="1" height="1"><g fill="none" stroke="#616161" stroke-width="1.2">
<path d="M645.8 97.5 V109"/><rect x="646" y="97.8" width="5.7" height="3.5"/><rect x="646" y="101.5" width="11.3" height="3.8"/>
<path d="M651 117.5 V119"/><rect x="647.8" y="119" width="6.6" height="3.2"/><rect x="645.8" y="123" width="10.5" height="3.8"/>
<path d="M657.5 137 V149"/><rect x="650.5" y="137.5" width="6.8" height="3.5"/><rect x="645.7" y="141.3" width="11.6" height="3.8"/>
<path d="M645 160.2 H657"/><rect x="646.2" y="160.5" width="3.5" height="5.8"/><rect x="650.6" y="160.5" width="3.8" height="10"/>
<rect x="646.7" y="181.5" width="3.3" height="5.3"/><rect x="651" y="179.3" width="3.8" height="9.5"/>
<path d="M645 210.5 H657"/><rect x="646.2" y="204.2" width="3.5" height="6"/><rect x="650.6" y="199.8" width="3.8" height="10.4"/>
<rect x="645.7" y="223.7" width="2" height="6.2" rx="0.8"/><rect x="650.5" y="222.2" width="3" height="9.2" rx="0.8"/><rect x="655.5" y="223.7" width="2" height="6.2" rx="0.8"/>
<rect x="648.8" y="241.2" width="5" height="2.2" rx="0.8"/><rect x="646.2" y="245.7" width="9.6" height="4.2" rx="0.8"/><rect x="647.8" y="251.6" width="6.6" height="2.8" rx="0.8"/>
</g>
<g fill="none" stroke="#2b88d8" stroke-width="0.8">
<path d="M647 107.8 H652 M647 107.8 L648.5 106.6 M647 107.8 L648.5 109"/>
<path d="M651 116.5 V118.5 M651 127 V129.5 M650 117.7 L651 116.5 L652 117.7 M650 128.3 L651 129.5 L652 128.3"/>
<path d="M651 148 H656 M656 148 L654.5 146.8 M656 148 L654.5 149.2"/>
<path d="M655.8 161 V166.5 M654.6 162.3 L655.8 161 L657 162.3"/>
<path d="M645 184.1 H646.5 M650.2 184.1 H650.8 M655 184.1 H657"/>
<path d="M655.8 203 V208.6 M654.6 207.3 L655.8 208.6 L657 207.3"/>
<path d="M648 227 H650.3 M653.7 227 H655.3"/>
<path d="M651.3 243.5 V245.5 M651.3 250 V251.5"/>
</g>
<path d="M648.5 289 L650.7 291.2 L654.5 286.8" fill="none" stroke="#333" stroke-width="1.2"/>
<path d="M648.5 330.8 L650.7 333 L654.5 328.6" fill="none" stroke="#333" stroke-width="1.2"/>
<path d="M649.3 366 V375.8 M653.5 366 V375.8 M646.3 369.2 H656.6 M646.3 372.7 H656.6" fill="none" stroke="#333" stroke-width="1"/>
</svg>
<div class="a" style="left:628px;top:71px;width:198px;height:321px;border:4px solid #000;border-radius:9px;box-shadow:1px 1px 4px rgba(0,0,0,.4), inset 1px 3px 7px rgba(0,0,0,.42)"></div>
</body></html>
